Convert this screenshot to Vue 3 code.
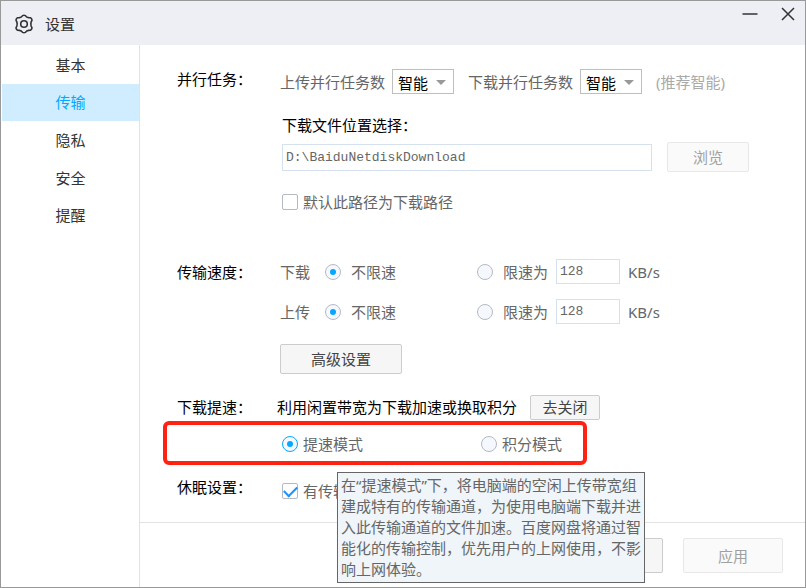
<script setup>
import { ref } from 'vue'

const tabs = ['基本', '传输', '隐私', '安全', '提醒']
const active = ref('传输')
const parallel = [
  { id: 'up-tasks', label: '上传并行任务数' },
  { id: 'down-tasks', label: '下载并行任务数' },
]
const path = ref('D:\\BaiduNetdiskDownload')
const useDefault = ref(false)
const speeds = ref([
  { id: 'down', label: '下载', mode: 'free', limit: '128' },
  { id: 'up', label: '上传', mode: 'free', limit: '128' },
])
const boost = ref('speed')
const keepAwake = ref(true)
</script>

<template>
  <div class="window">
    <header class="titlebar">
      <svg class="gear" viewBox="0 0 20 20" aria-hidden="true">
        <path d="M8.6 1.6 Q10 0.9 11.4 1.6 Q12.6 3.4 14.6 3.6 L16.4 3.7 Q17.8 4.6 18 6.2 Q16.6 8.2 16.9 10 Q16.6 11.8 18 13.8 Q17.8 15.4 16.4 16.3 L14.6 16.4 Q12.6 16.6 11.4 18.4 Q10 19.1 8.6 18.4 Q7.4 16.6 5.4 16.4 L3.6 16.3 Q2.2 15.4 2 13.8 Q3.4 11.8 3.1 10 Q3.4 8.2 2 6.2 Q2.2 4.6 3.6 3.7 L5.4 3.6 Q7.4 3.4 8.6 1.6 Z" />
        <circle cx="10" cy="10" r="3.3" />
      </svg>
      <h1>设置</h1>
      <div class="controls">
        <button type="button" aria-label="最小化">
          <svg viewBox="0 0 16 16"><path d="M0.5 8H15.5" /></svg>
        </button>
        <button type="button" aria-label="关闭">
          <svg viewBox="0 0 16 16"><path d="M2 2L14 14M14 2L2 14" /></svg>
        </button>
      </div>
    </header>

    <div class="body">
      <nav class="sidebar">
        <button
          v-for="t in tabs"
          :key="t"
          type="button"
          class="tab"
          :class="{ active: t === active }"
          @click="active = t"
        >{{ t }}</button>
      </nav>

      <div class="panel">
        <main class="content">
          <section class="group tasks">
            <h2>并行任务：</h2>
            <div class="fields">
              <div class="row parallel">
                <template v-for="p in parallel" :key="p.id">
                  <label :for="p.id">{{ p.label }}</label>
                  <span class="select">
                    <select :id="p.id"><option>智能</option></select>
                  </span>
                </template>
                <span class="hint">(推荐智能)</span>
              </div>
              <label class="strong path-label" for="path">下载文件位置选择：</label>
              <div class="row path-row">
                <input id="path" v-model="path" class="text" type="text" />
                <button type="button" class="btn muted">浏览</button>
              </div>
              <label class="choice default-path">
                <input v-model="useDefault" type="checkbox" />默认此路径为下载路径
              </label>
            </div>
          </section>

          <section class="group speed">
            <h2>传输速度：</h2>
            <div class="fields">
              <div v-for="s in speeds" :key="s.id" class="row speed-row">
                <span class="direction">{{ s.label }}</span>
                <label class="choice wide free">
                  <input v-model="s.mode" type="radio" :name="s.id" value="free" />不限速
                </label>
                <label class="choice wide">
                  <input v-model="s.mode" type="radio" :name="s.id" value="limited" />限速为
                </label>
                <input v-model="s.limit" class="text limit" type="text" :aria-label="s.label + '限速'" />
                <span>KB/s</span>
              </div>
              <button type="button" class="btn advanced">高级设置</button>
            </div>
          </section>

          <section class="group boost">
            <h2>下载提速：</h2>
            <div class="row boost-row">
              <span class="strong">利用闲置带宽为下载加速或换取积分</span>
              <button type="button" class="btn small">去关闭</button>
            </div>
          </section>

          <div class="modes">
            <label class="choice mode">
              <input v-model="boost" type="radio" name="boost" value="speed" />提速模式
            </label>
            <label class="choice">
              <input v-model="boost" type="radio" name="boost" value="points" />积分模式
            </label>
            <div class="tooltip" role="tooltip">在“提速模式”下，将电脑端的空闲上传带宽组建成特有的传输通道，为使用电脑端下载并进入此传输通道的文件加速。百度网盘将通过智能化的传输控制，优先用户的上网使用，不影响上网体验。</div>
          </div>

          <section class="group sleep">
            <h2>休眠设置：</h2>
            <label class="choice awake">
              <input v-model="keepAwake" type="checkbox" />有传输
            </label>
          </section>
        </main>

        <footer class="footer">
          <button type="button" class="btn action" aria-label="取消"></button>
          <button type="button" class="btn action muted">应用</button>
        </footer>
      </div>
    </div>
  </div>
</template>

<style>
body {
  background: #fff;
}
</style>

<style scoped>
.window,
.window * {
  box-sizing: border-box;
}

.window {
  display: flex;
  flex-direction: column;
  min-height: 100vh;
  border: 1px solid #999;
  background: #fff;
  color: #666;
  font: 15px/20px "Noto Sans", "Noto Sans CJK SC", sans-serif;
}

button,
input,
select {
  margin: 0;
  font: inherit;
}

.titlebar {
  display: flex;
  align-items: center;
  height: 44px;
  padding: 1px 0 0 13px;
  background: #eeeff5;
}

.gear {
  width: 20px;
  height: 20px;
  margin-right: 11px;
  fill: none;
  stroke: #333;
  stroke-width: 1.6;
  stroke-linejoin: round;
}

h1,
h2 {
  margin: 0;
  font-size: 15px;
  font-weight: 400;
}

h1 {
  color: #333;
}

h2,
.strong {
  color: #000;
}

.controls {
  display: flex;
  align-self: flex-start;
  gap: 22px;
  margin: 4px 9px 0 auto;
}

.controls button {
  display: block;
  width: 16px;
  height: 16px;
  padding: 0;
  border: 0;
  background: none;
}

.controls svg {
  display: block;
  fill: none;
  stroke: #333;
  stroke-width: 1.5;
}

.body {
  display: flex;
  flex: 1;
}

.sidebar {
  display: grid;
  grid-auto-rows: 1fr;
  flex: none;
  width: 138px;
  height: 188px;
  margin-top: 1px;
  padding-left: 1px;
}

.tab {
  padding: 0;
  border: 0;
  background: none;
  color: #333;
}

.tab.active {
  background: #d0ecff;
  color: #06a7ff;
}

.panel {
  display: flex;
  flex: 1;
  flex-direction: column;
  border-left: 1px solid #e2e2e2;
}

.content {
  flex: 1;
  padding: 24px 56px 20px 37px;
}

.group {
  display: flex;
}

.group h2 {
  flex: none;
  width: 103px;
}

.fields {
  flex: 1;
}

.row {
  display: flex;
  align-items: center;
}

.parallel {
  height: 25px;
}

.select {
  position: relative;
  margin: 0 14px 0 7px;
}

.select::after {
  content: "";
  position: absolute;
  top: 11px;
  right: 8px;
  border: 5px solid transparent;
  border-top-color: #999;
  border-bottom: 0;
  pointer-events: none;
}

select {
  display: block;
  width: 62px;
  height: 25px;
  padding: 2px 0 0 5px;
  border: 1px solid #bfbfbf;
  border-radius: 0;
  background: #fff;
  color: #000;
  appearance: none;
}

.hint {
  color: #aaa;
}

.path-label {
  display: block;
  margin: 21px 0 7px 2px;
}

.path-row {
  gap: 15px;
  margin-left: 2px;
}

.text {
  flex: 1;
  min-width: 0;
  height: 27px;
  padding: 0 3px;
  border: 1px solid #d5e1ef;
  background: #fff;
  color: #666;
  font-family: "Liberation Mono", monospace;
  font-size: 13px;
}

.btn {
  flex: none;
  width: 82px;
  height: 30px;
  padding: 0;
  border: 1px solid #ccc;
  border-radius: 2px;
  background: #f6f6f6;
  color: #444;
}

.btn.muted {
  border-color: #e8e8e8;
  background: #fafafa;
  color: #a0a0a0;
}

.choice {
  display: flex;
  align-items: center;
  gap: 5px;
}

.choice.wide {
  gap: 10px;
}

.choice input {
  display: grid;
  place-content: center;
  flex: none;
  width: 16px;
  height: 16px;
  border: 1px solid #b4b9c2;
  appearance: none;
}

.choice input[type="checkbox"] {
  border-radius: 2px;
  background: #fff;
}

.choice input[type="checkbox"]:checked::after {
  content: "";
  width: 11px;
  height: 6px;
  margin-bottom: 3px;
  border: solid #1e90ff;
  border-width: 0 0 2px 2px;
  transform: rotate(-45deg);
}

.choice input[type="radio"] {
  border-radius: 50%;
  background: #f5f9ff;
}

.choice input[type="radio"]:checked::after {
  content: "";
  width: 6px;
  height: 6px;
  border-radius: 50%;
  background: #06a7ff;
}

.default-path {
  margin: 20px 0 0 2px;
}

.speed {
  margin-top: 47px;
}

.speed h2,
.boost h2 {
  line-height: 26px;
}

.speed-row {
  height: 25px;
  margin-bottom: 15px;
}

.direction {
  width: 45px;
}

.free {
  width: 152px;
}

.text.limit {
  flex: none;
  width: 64px;
  height: 25px;
  margin: 0 8px;
}

.advanced {
  display: block;
  width: 122px;
  margin-top: 20px;
}

.boost {
  margin-top: 20px;
}

.boost-row {
  gap: 13px;
  margin-left: -3px;
}

.small {
  width: 70px;
  height: 25px;
}

.modes {
  position: relative;
  display: flex;
  align-items: center;
  width: 424px;
  height: 44px;
  margin: 1px 0 0 -14px;
  padding: 2px 0 0 115px;
  border: 4px solid #ff2112;
  border-radius: 6px;
}

.mode {
  width: 199px;
}

.modes input:checked {
  border-color: #06a7ff;
}

.tooltip {
  position: absolute;
  z-index: 1;
  top: 47px;
  left: 170px;
  width: 308px;
  padding: 2px 3px;
  border: 1px solid #666;
  background: #f0f5f9;
  line-height: 21px;
}

.sleep {
  margin-top: 12px;
}

.awake {
  margin: 4px 0 0 2px;
}

.footer {
  display: flex;
  justify-content: flex-end;
  gap: 20px;
  padding: 15px 22px 14px;
  border-top: 1px solid #e2e2e2;
}

.action {
  width: 100px;
  height: 35px;
}
</style>
